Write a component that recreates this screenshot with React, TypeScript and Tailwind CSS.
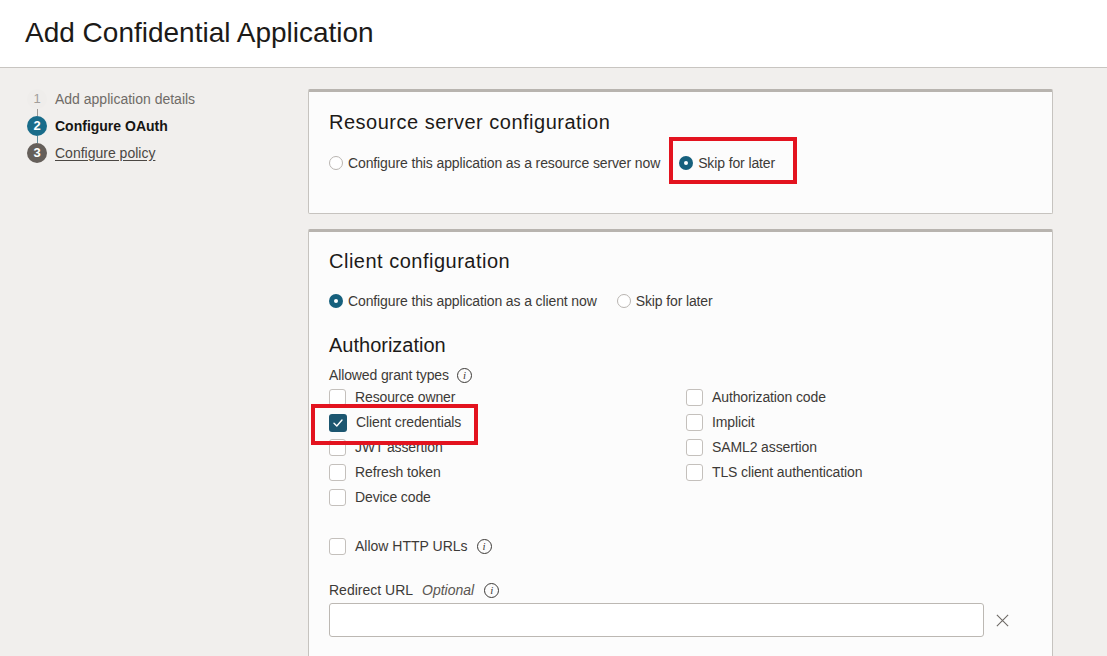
import React from "react";

const Radio = ({ checked, label }: { checked?: boolean; label: string }) => (
  <label className="flex items-center gap-[5px]">
    {checked ? (
      <span className="w-[14px] h-[14px] rounded-full bg-[#16607d] flex items-center justify-center">
        <span className="w-[4px] h-[4px] rounded-full bg-white" />
      </span>
    ) : (
      <span className="w-[14px] h-[14px] rounded-full border border-[#b9b5b1] bg-white" />
    )}
    <span className="text-[14px] text-[#3c3a37] tracking-[-0.12px]">{label}</span>
  </label>
);

const Check = ({ checked, label }: { checked?: boolean; label: string }) => (
  <div className="flex items-center h-[25px]">
    {checked ? (
      <span className="w-[18px] h-[18px] rounded-[3px] bg-[#1c5670] flex items-center justify-center">
        <svg width="12" height="12" viewBox="0 0 12 12" fill="none">
          <path d="M2 6.3 L4.8 9 L10 3" stroke="white" strokeWidth="1.4" strokeLinecap="round" strokeLinejoin="round" />
        </svg>
      </span>
    ) : (
      <span className="w-[17px] h-[17px] rounded-[3px] border border-[#c4c0bc] bg-white" />
    )}
    <span className="ml-[9px] text-[14px] text-[#3c3a37] tracking-[-0.12px]">{label}</span>
  </div>
);

const Info = () => (
  <span className="inline-flex w-[15px] h-[15px] rounded-full border border-[#3c3a37] items-center justify-center text-[11px] italic leading-none text-[#3c3a37] font-['Liberation_Serif',serif]">
    i
  </span>
);

export default function App() {
  return (
    <div className="relative w-[1107px] h-[656px] overflow-hidden bg-[#f1efed] font-['Liberation_Sans',Arial,sans-serif] text-[#161513]">
      <header className="h-[68px] bg-white border-b border-[#c8c5c1] flex items-center pl-[25px]">
        <h1 className="text-[28px] leading-none text-[#1c1a18] -mt-[1px]">Add Confidential Application</h1>
      </header>
      <div className="flex">
        <aside className="w-[308px] pl-[27px] pt-[21px]">
          <div className="flex flex-col">
            <div className="flex items-center h-[20px]">
              <span className="w-[20px] h-[20px] rounded-full bg-[#efedeb] flex items-center justify-center text-[13px] text-[#a29e9a]">1</span>
              <span className="ml-[8px] text-[14px] text-[#6f6b67]">Add application details</span>
            </div>
            <div className="ml-[9.5px] w-px h-[7px] bg-[#9d9995]" />
            <div className="flex items-center h-[20px]">
              <span className="w-[20px] h-[20px] rounded-full bg-[#196c8a] flex items-center justify-center text-[13px] text-white font-bold">2</span>
              <span className="ml-[8px] text-[14px] font-bold text-[#161513]">Configure OAuth</span>
            </div>
            <div className="ml-[9.5px] w-px h-[7px] bg-[#5e8a99]" />
            <div className="flex items-center h-[20px]">
              <span className="w-[20px] h-[20px] rounded-full bg-[#655f5a] flex items-center justify-center text-[13px] text-white font-bold">3</span>
              <span className="ml-[8px] text-[14px] text-[#4b4743] underline underline-offset-2">Configure policy</span>
            </div>
          </div>
        </aside>
        <main className="w-[745px] pt-[21px] flex flex-col gap-[15px]">
          <section className="bg-[#fcfcfc] border border-[#c6c3bf] border-t-[3px] border-t-[#b8b4af] rounded-[2px] pl-[20px] pt-[18px] pb-[40px]">
            <h2 className="text-[20px] leading-[24px] text-[#1c1a18] tracking-[0.5px]">Resource server configuration</h2>
            <div className="mt-[19px] flex items-center gap-[19px] h-[20px]">
              <Radio label="Configure this application as a resource server now" />
              <Radio checked label="Skip for later" />
            </div>
          </section>
          <section className="bg-[#fcfcfc] border border-[#c6c3bf] border-t-[3px] border-t-[#b8b4af] rounded-[2px] pl-[20px] pr-[68px] pt-[17px] pb-[40px]">
            <h2 className="text-[20px] leading-[24px] text-[#1c1a18] tracking-[0.5px]">Client configuration</h2>
            <div className="mt-[18px] flex items-center gap-[20px] h-[20px]">
              <Radio checked label="Configure this application as a client now" />
              <Radio label="Skip for later" />
            </div>
            <h3 className="mt-[22px] text-[20px] leading-[24px] text-[#1c1a18]">Authorization</h3>
            <div className="mt-[9px] flex items-center gap-[8px] h-[18px]">
              <span className="text-[14px] text-[#3c3a37] tracking-[-0.12px]">Allowed grant types</span>
              <Info />
            </div>
            <div className="mt-[1px] grid grid-cols-[357px_1fr]">
              <div className="flex flex-col">
                <Check label="Resource owner" />
                <Check checked label="Client credentials" />
                <Check label="JWT assertion" />
                <Check label="Refresh token" />
                <Check label="Device code" />
              </div>
              <div className="flex flex-col">
                <Check label="Authorization code" />
                <Check label="Implicit" />
                <Check label="SAML2 assertion" />
                <Check label="TLS client authentication" />
              </div>
            </div>
            <div className="mt-[24px] flex items-center h-[25px]">
              <span className="w-[17px] h-[17px] rounded-[3px] border border-[#c4c0bc] bg-white" />
              <span className="ml-[9px] text-[14px] text-[#3c3a37]">Allow HTTP URLs</span>
              <span className="ml-[9px] flex"><Info /></span>
            </div>
            <div className="mt-[22px] flex items-center h-[18px]">
              <span className="text-[14px] text-[#3c3a37]">Redirect URL</span>
              <span className="ml-[9px] text-[14px] italic text-[#5a5652]">Optional</span>
              <span className="ml-[10px] flex"><Info /></span>
            </div>
            <div className="mt-[4px] flex items-center">
              <div className="shrink-0 w-[655px] h-[34px] rounded-[3px] border border-[#bcb8b3] bg-white" />
              <svg className="shrink-0 ml-[11px]" width="15" height="15" viewBox="0 0 16 16" fill="none">
                <path d="M2 2 L14 14 M14 2 L2 14" stroke="#6f6b67" strokeWidth="1.2" />
              </svg>
            </div>
          </section>
        </main>
      </div>
      <div className="absolute left-[669px] top-[137px] w-[128px] h-[47px] border-[4px] border-[#e3131f]" />
      <div className="absolute left-[311px] top-[404px] w-[167px] h-[41px] border-[4px] border-[#e3131f]" />
    </div>
  );
}
